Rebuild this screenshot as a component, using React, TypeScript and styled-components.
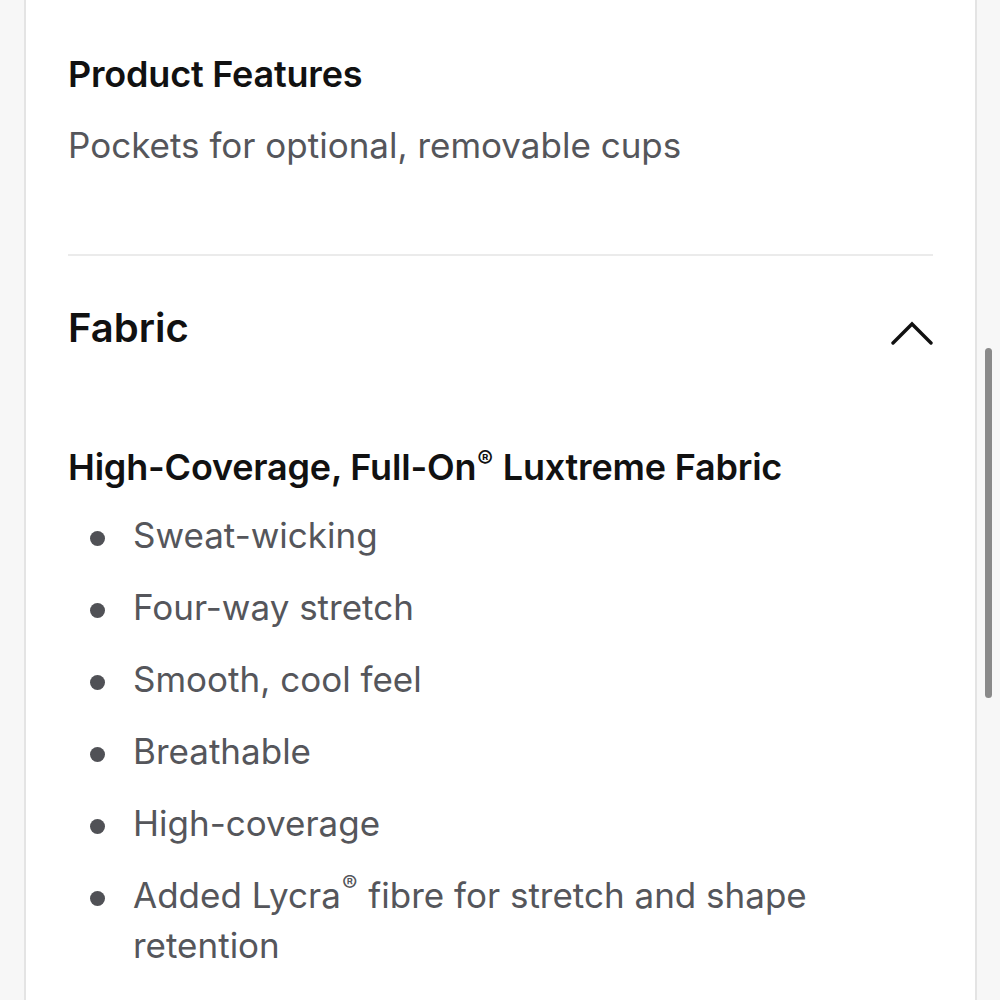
import React from "react";
import styled, { createGlobalStyle } from "styled-components";

const Global = createGlobalStyle`
  html, body { margin: 0; padding: 0; background: #f7f7f7; }
  body { font-family: Inter, "Noto Sans", sans-serif; -webkit-font-smoothing: antialiased; }
`;

const Page = styled.div`
  position: relative;
  height: 1000px;
  overflow: hidden;
  display: flex;
  padding-left: 24px;
  background: #f7f7f7;
`;

const Card = styled.main`
  width: 953px;
  flex: none;
  background: #ffffff;
  border-left: 2px solid #e4e4e4;
  border-right: 2px solid #e4e4e4;
  padding: 52px 42px 0 42px;
  box-sizing: border-box;
`;

const SubHeading = styled.h3`
  margin: 0;
  font-size: 36px;
  line-height: 44px;
  font-weight: 600;
  color: #111;
  letter-spacing: -0.2px;
`;

const Body = styled.p`
  margin: 27px 0 0;
  font-size: 35px;
  line-height: 44px;
  font-weight: 400;
  color: #55565b;
`;

const Divider = styled.hr`
  margin: 87px 0 0;
  border: none;
  height: 2px;
  background: #ebebeb;
`;

const SectionHeader = styled.div`
  display: flex;
  align-items: center;
  justify-content: space-between;
  margin-top: 48px;
`;

const SectionTitle = styled.h2`
  margin: 0;
  font-size: 40px;
  line-height: 48px;
  font-weight: 600;
  color: #111;
`;

const Chevron = styled.svg`
  width: 42px;
  height: 26px;
  margin-top: 10px;
`;

const FabricTitle = styled(SubHeading)`
  margin-top: 93px;
`;

const List = styled.ul`
  list-style: none;
  margin: 21px 0 0;
  padding: 0;
  display: flex;
  flex-direction: column;
  gap: 22px;
`;

const Item = styled.li`
  display: grid;
  grid-template-columns: 65px 1fr;
  font-size: 35px;
  line-height: 50px;
  color: #55565b;
`;

const Dot = styled.span`
  width: 15px;
  height: 15px;
  border-radius: 50%;
  background: #505156;
  margin: 21px 0 0 22px;
`;

const Reg = styled.span`
  display: inline-block;
  font-size: 0.66em;
  line-height: 1;
  vertical-align: top;
  margin: 0.12em 1px 0 1px;
`;

const Scrollbar = styled.div`
  position: absolute;
  right: 8px;
  top: 348px;
  width: 7px;
  height: 350px;
  border-radius: 4px;
  background: #8a8a8a;
`;

const items: React.ReactNode[] = [
  "Sweat-wicking",
  "Four-way stretch",
  "Smooth, cool feel",
  "Breathable",
  "High-coverage",
  <>Added Lycra<Reg>®</Reg> fibre for stretch and shape retention</>,
];

export default function App() {
  return (
    <>
      <Global />
      <Page>
        <Card>
          <SubHeading>Product Features</SubHeading>
          <Body>Pockets for optional, removable cups</Body>
          <Divider />
          <SectionHeader>
            <SectionTitle>Fabric</SectionTitle>
            <Chevron viewBox="0 0 42 26" fill="none">
              <path d="M2 23 L21 4 L40 23" stroke="#111" strokeWidth="3.4" strokeLinecap="round" strokeLinejoin="miter" />
            </Chevron>
          </SectionHeader>
          <FabricTitle>High-Coverage, Full-On<Reg>®</Reg> Luxtreme Fabric</FabricTitle>
          <List>
            {items.map((t, i) => (
              <Item key={i}>
                <Dot />
                <span>{t}</span>
              </Item>
            ))}
          </List>
        </Card>
        <Scrollbar />
      </Page>
    </>
  );
}
